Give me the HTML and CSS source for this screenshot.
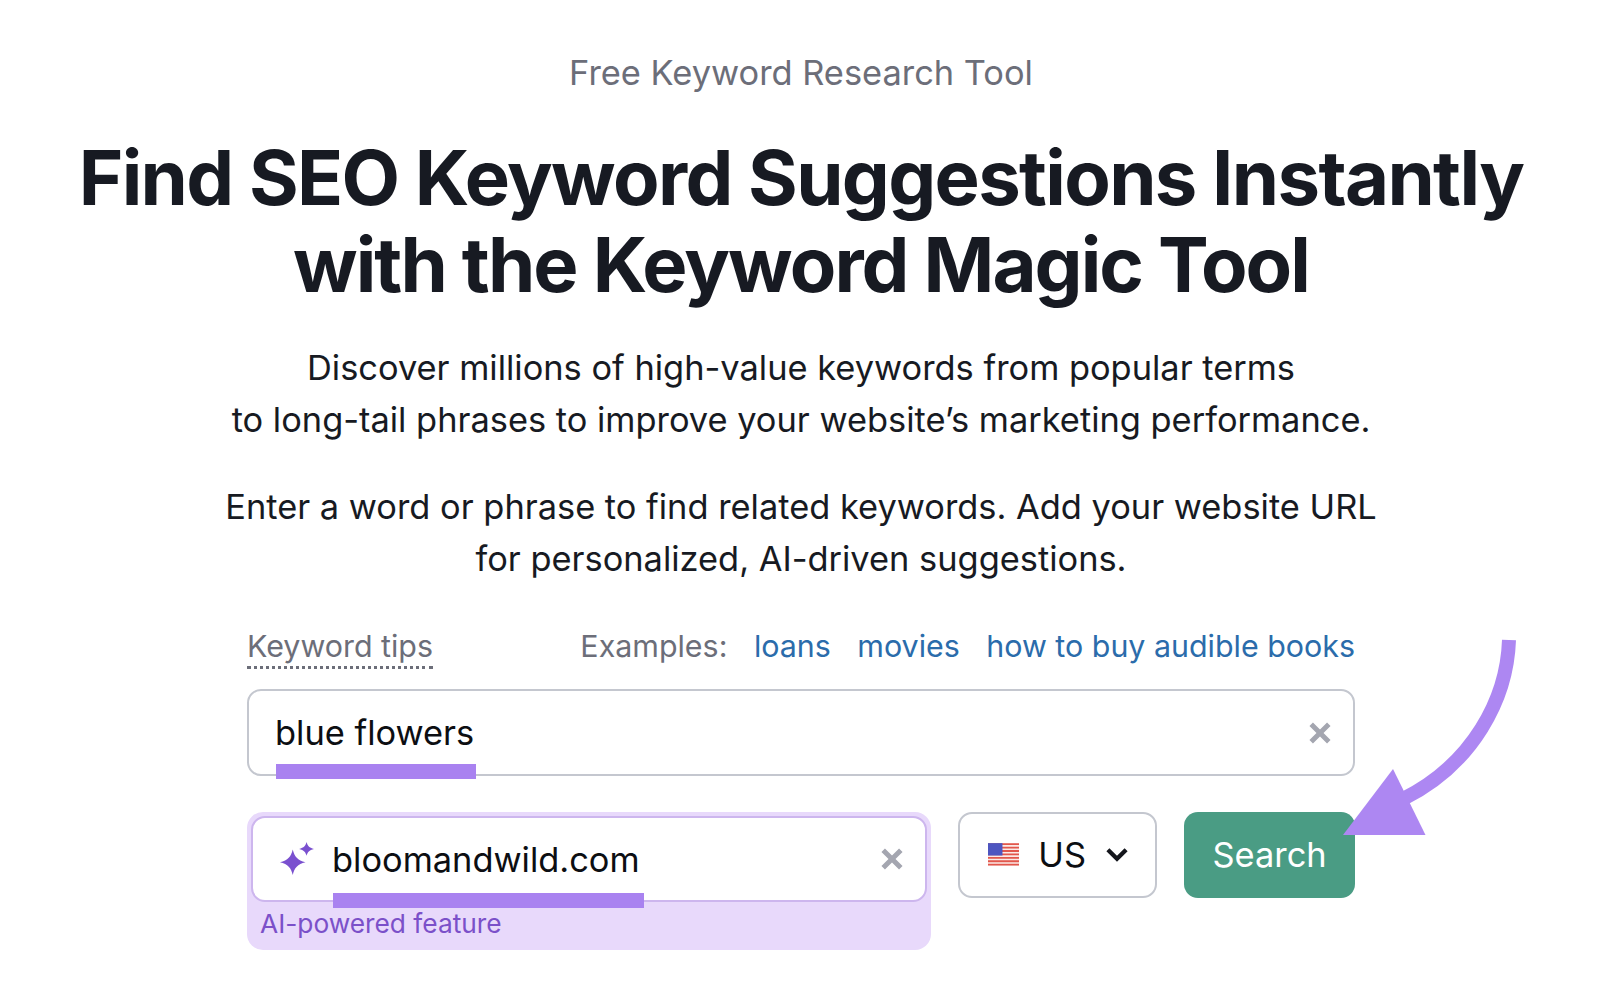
FILE: index.html
```html
<!DOCTYPE html>
<html lang="en">
<head>
    <meta charset="UTF-8">
    <title>Free Keyword Research Tool</title>
    <link rel="stylesheet" href="styles.css">
</head>
<body>
    <main class="page">
        <p class="eyebrow">Free Keyword Research Tool</p>
        <h1>Find SEO Keyword Suggestions Instantly<br><span class="second-line">with the Keyword Magic Tool</span></h1>
        <p class="lead">Discover millions of high-value keywords from popular terms<br>to long-tail phrases to improve your website’s marketing performance.</p>
        <p class="lead second">Enter a word or phrase to find related keywords. Add your website URL<br>for personalized, AI-driven suggestions.</p>

        <form class="search-form">
            <div class="tips-row">
                <span class="tips">Keyword tips</span>
                <div class="examples">
                    <span class="examples-label">Examples:</span>
                    <a href="#">loans</a>
                    <a href="#">movies</a>
                    <a href="#">how to buy audible books</a>
                </div>
            </div>

            <div class="field keyword-field">
                <span class="value">blue flowers<i class="mark"></i></span>
                <svg class="clear" viewBox="0 0 20 20"><path d="M2 2 18 18M18 2 2 18"/></svg>
            </div>

            <div class="bottom-row">
                <div class="ai-box">
                    <div class="field site-field">
                        <svg class="sparkle" viewBox="0 0 32 32">
                            <path d="M12 7c1.600 7 4.500 10 12 12-7.500 2-10.400 5-12 12-1.600-7-4.500-10-12-12 7.500-2 10.400-5 12-12z"/>
                            <path d="M25 0c.9 3.600 2.500 5.400 7 6.500-4.500 1.100-6.100 2.900-7 6.500-.9-3.600-2.500-5.400-7-6.500 4.500-1.100 6.100-2.900 7-6.500z"/>
                        </svg>
                        <span class="value">bloomandwild.com<i class="mark"></i></span>
                        <svg class="clear" viewBox="0 0 20 20"><path d="M2 2 18 18M18 2 2 18"/></svg>
                    </div>
                    <span class="ai-note">AI-powered feature</span>
                </div>

                <div class="country">
                    <svg class="flag" viewBox="0 0 30 22">
                        <rect width="30" height="22" fill="#fbeae6"/>
                        <path d="M0 1h30M0 4.300h30M0 7.600h30M0 10.900h30M0 14.200h30M0 17.500h30M0 20.800h30" stroke="#e2574c" stroke-width="1.800"/>
                        <rect width="14" height="12" fill="#4d55c0"/>
                    </svg>
                    <span>US</span>
                    <svg class="chevron" viewBox="0 0 22 14"><path d="M2.500 2.500 11 11l8.500-8.500"/></svg>
                </div>

                <button type="button" class="search-button">Search</button>
            </div>

            <svg class="arrow" viewBox="0 0 180 200">
                <path class="arrow-line" d="M166 1C164 60 130 125 60 160"/>
                <path class="arrow-head" d="M50 130 82.500 196 0 196z"/>
            </svg>
        </form>
    </main>
</body>
</html>
```

FILE: styles.css
```css
body {
    margin: 0;
    background: white;
    font-family: Inter, "Liberation Sans", sans-serif;
    color: #171a22;
}

.page {
    display: flex;
    flex-direction: column;
    align-items: center;
    text-align: center;
    padding: 51px 0 0 2px;
}

.eyebrow {
    margin: 0;
    font-size: 34.400px;
    line-height: 44px;
    color: #6c6e79;
}

h1 {
    margin: 39px 0 0;
    font-size: 76px;
    line-height: 87px;
    font-weight: 650;
    letter-spacing: -1.650px;
    white-space: nowrap;
}

.second-line {
    letter-spacing: -1.950px;
}

.lead {
    margin: 34px 0 0;
    font-size: 34.400px;
    line-height: 52px;
    white-space: nowrap;
}

.lead.second {
    margin-top: 35px;
}

.search-form {
    position: relative;
    width: 1108px;
    margin-top: 41px;
    text-align: left;
}

.tips-row {
    display: flex;
    justify-content: space-between;
    align-items: flex-start;
    font-size: 30.400px;
    line-height: 40px;
    color: #6c6e79;
}

.tips {
    border-bottom: 3px dotted #6c6e79;
}

.examples {
    display: flex;
    gap: 26.500px;
}

.examples a {
    color: #2b6cab;
    text-decoration: none;
}

.field {
    display: flex;
    align-items: center;
    box-sizing: border-box;
    background: white;
    border: 2px solid #c4c7cf;
    border-radius: 14px;
    font-size: 34.400px;
    color: #0c0e12;
}

.keyword-field {
    height: 87px;
    margin-top: 20px;
    padding: 0 22px 0 26px;
}

.value {
    position: relative;
    flex: 1;
    white-space: nowrap;
}

.mark {
    position: absolute;
    left: 1px;
    height: 15px;
    background: #a982f0;
}

.keyword-field .mark {
    top: 52px;
    width: 200px;
}

.site-field .mark {
    top: 54px;
    width: 311px;
}

.clear {
    width: 22px;
    height: 22px;
    fill: none;
    stroke: #a4a6b0;
    stroke-width: 4.500;
}

.bottom-row {
    display: flex;
    align-items: flex-start;
    margin-top: 36px;
}

.ai-box {
    box-sizing: border-box;
    width: 685px;
    height: 138px;
    padding: 4px;
    background: #e8d9fb;
    border-radius: 16px;
}

.site-field {
    height: 86px;
    padding: 0 22px 0 27px;
    border-color: #cdb6ee;
}

.sparkle {
    width: 34px;
    height: 34px;
    margin-right: 18px;
    fill: #7a50cf;
}

.ai-note {
    display: block;
    padding: 4px 0 0 9px;
    font-size: 26.300px;
    line-height: 36px;
    color: #7b50c9;
}

.country {
    display: flex;
    align-items: center;
    box-sizing: border-box;
    width: 199px;
    height: 86px;
    margin-left: 27px;
    padding: 0 0 2px 28px;
    background: white;
    border: 2px solid #c4c7cf;
    border-radius: 14px;
    font-size: 34.400px;
    color: #0c0e12;
}

.flag {
    width: 31px;
    height: 23px;
    margin-right: 19px;
}

.chevron {
    width: 24px;
    height: 15px;
    margin-left: 19px;
    fill: none;
    stroke: #14161c;
    stroke-width: 4;
}

.search-button {
    width: 171px;
    height: 86px;
    margin-left: 27px;
    padding-bottom: 3px;
    border: none;
    border-radius: 14px;
    background: #4a9c84;
    color: white;
    font-family: inherit;
    font-size: 34.400px;
}

.arrow {
    position: absolute;
    left: 1096px;
    top: 13px;
    width: 180px;
    height: 200px;
    overflow: visible;
}

.arrow-line {
    fill: none;
    stroke: #ad87f2;
    stroke-width: 14;
}

.arrow-head {
    fill: #ad87f2;
}
```
